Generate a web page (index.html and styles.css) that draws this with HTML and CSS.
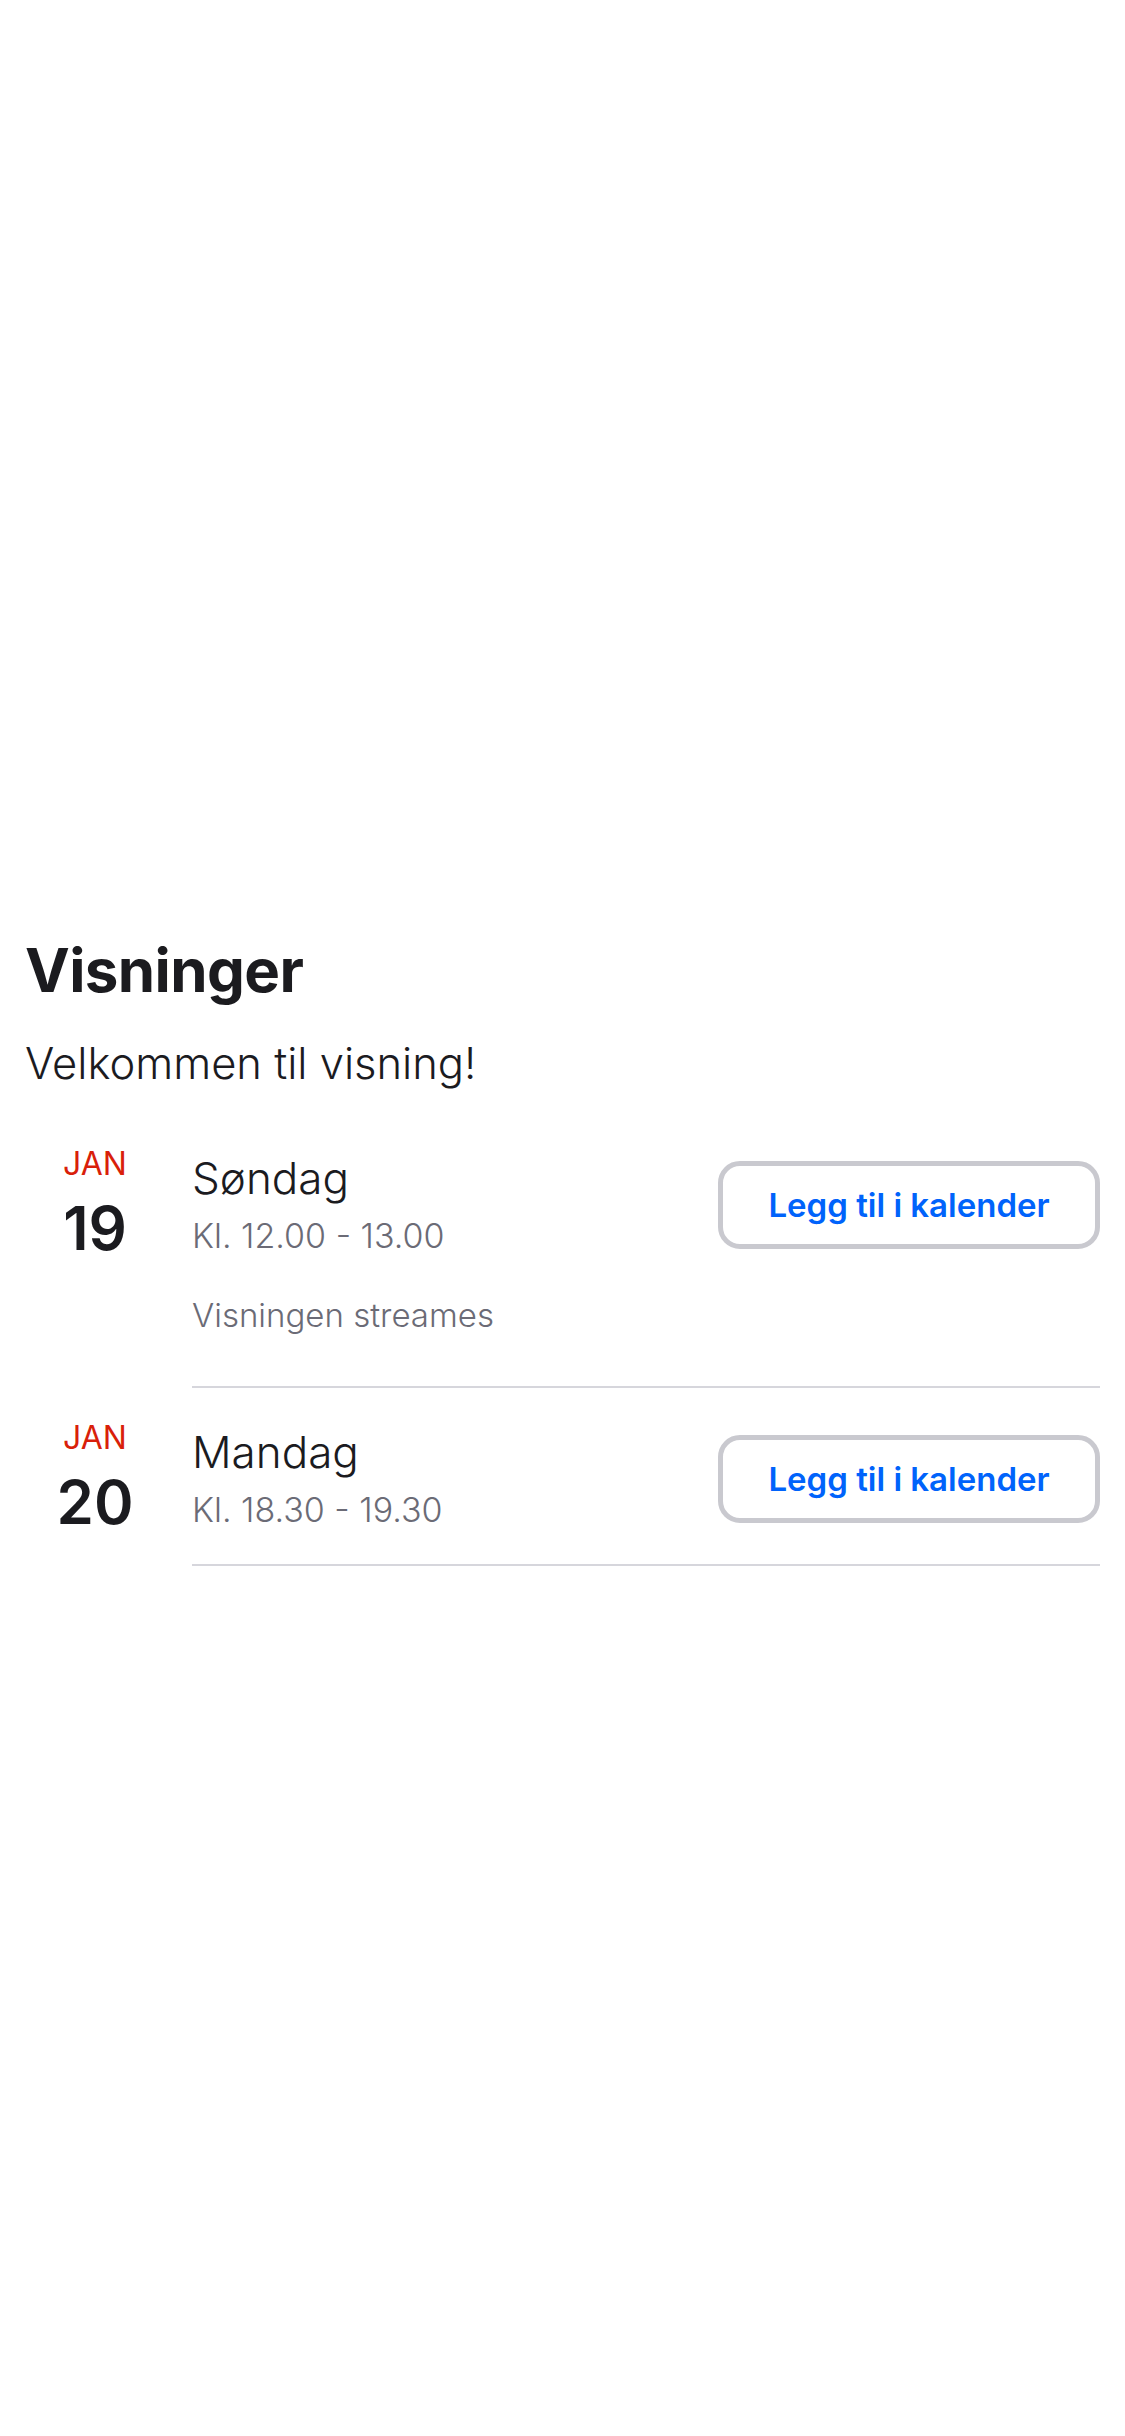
FILE: index.html
```html
<!DOCTYPE html>
<html lang="no">
<head>
<meta charset="utf-8">
<title>Visninger</title>
<link rel="stylesheet" href="styles.css">
</head>
<body>
<main class="page">
  <section class="viewings">
    <h1 class="title">Visninger</h1>
    <p class="intro">Velkommen til visning!</p>
    <ul class="list">
      <li class="item">
        <div class="date">
          <span class="month">JAN</span>
          <span class="day">19</span>
        </div>
        <div class="body">
          <div class="top">
            <div class="info">
              <div class="weekday">Søndag</div>
              <div class="time">Kl. 12.00 - 13.00</div>
            </div>
            <button class="cal-btn">Legg til i kalender</button>
          </div>
          <div class="note">Visningen streames</div>
        </div>
      </li>
      <li class="item">
        <div class="date">
          <span class="month">JAN</span>
          <span class="day">20</span>
        </div>
        <div class="body">
          <div class="top">
            <div class="info">
              <div class="weekday">Mandag</div>
              <div class="time">Kl. 18.30 - 19.30</div>
            </div>
            <button class="cal-btn">Legg til i kalender</button>
          </div>
        </div>
      </li>
    </ul>
  </section>
</main>
</body>
</html>
```

FILE: styles.css
```css
html, body {
  margin: 0;
  padding: 0;
  background: #ffffff;
}
body {
  font-family: Inter, "Noto Sans", "Liberation Sans", sans-serif;
  color: #1b1b1f;
}
.page {
  padding: 930px 25px 0 25px;
}
.title {
  margin: 0;
  font-size: 60px;
  font-weight: 700;
  line-height: 80px;
  letter-spacing: -0.6px;
}
.intro {
  margin: 23px 0 0 0;
  font-size: 43.5px;
  font-weight: 300;
  line-height: 60px;
}
.list {
  list-style: none;
  margin: 21px 0 0 0;
  padding: 0;
}
.item {
  display: flex;
}
.date {
  width: 140px;
  flex: none;
  display: flex;
  flex-direction: column;
  align-items: center;
  padding-top: 30px;
  margin-right: 27px;
}
.month {
  font-size: 32px;
  font-weight: 400;
  color: #d91f0a;
  line-height: 40px;
}
.day {
  margin-top: 11px;
  font-size: 60px;
  font-weight: 600;
  line-height: 66px;
}
.body {
  flex: 1;
  border-bottom: 2px solid #d6d6dc;
  padding: 37px 0 32px 0;
}
.top {
  display: flex;
  justify-content: space-between;
  align-items: center;
}
.weekday {
  font-size: 44px;
  font-weight: 300;
  line-height: 54px;
}
.time {
  margin-top: 9px;
  font-size: 34px;
  font-weight: 300;
  color: #6b6b76;
  line-height: 44px;
}
.note {
  margin: 35px 0 17px 0;
  font-size: 33px;
  font-weight: 300;
  color: #6b6b76;
  line-height: 44px;
}
.cal-btn {
  width: 382px;
  height: 88px;
  border: 5px solid #c9c9cf;
  border-radius: 22px;
  background: #ffffff;
  font-family: Inter, "Noto Sans", sans-serif;
  font-size: 33px;
  font-weight: 600;
  color: #0063fb;
  padding: 0;
}
```
